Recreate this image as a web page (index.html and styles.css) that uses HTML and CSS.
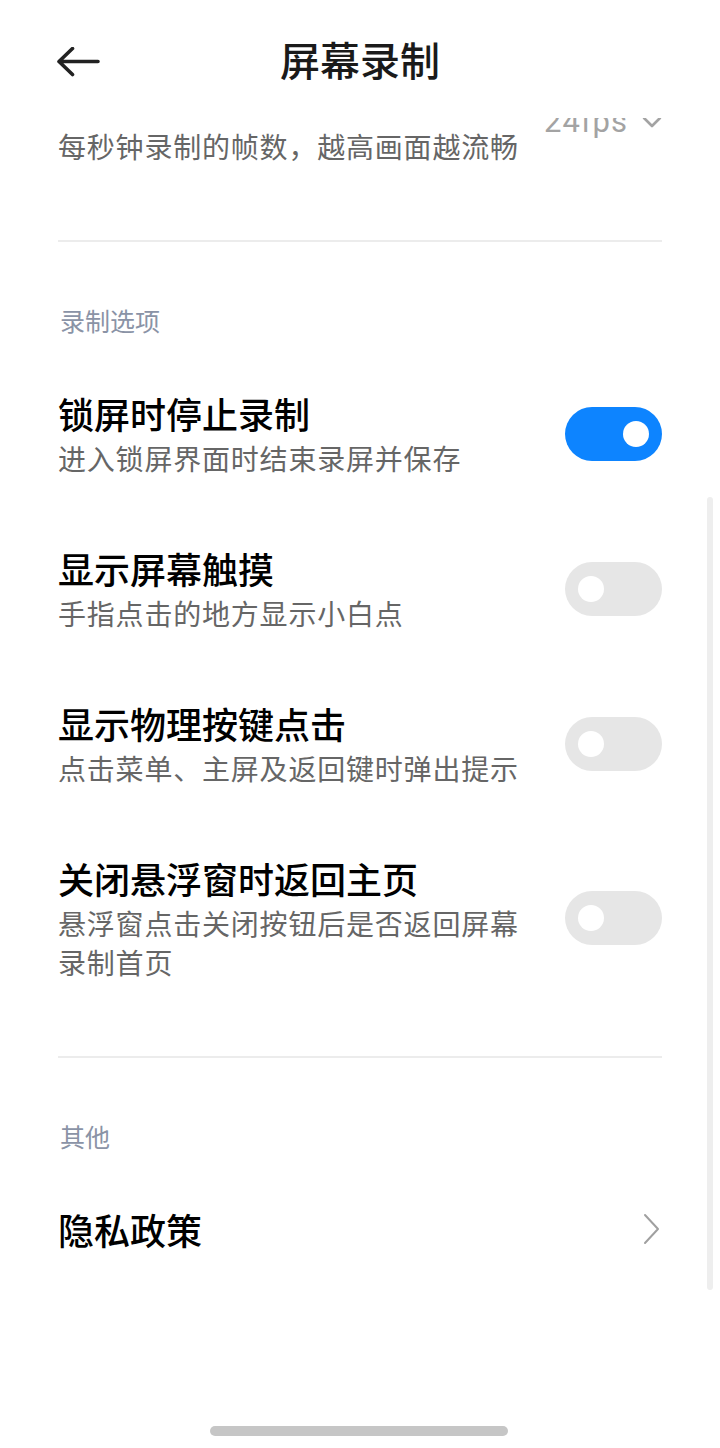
FILE: index.html
```html
<!DOCTYPE html>
<html lang="zh-CN">
<head>
  <meta charset="UTF-8">
  <meta name="viewport" content="width=device-width, initial-scale=1.0">
  <title>屏幕录制</title>
  <link rel="stylesheet" href="styles.css">
</head>
<body>
  <header class="topbar">
    <a class="back" href="#">
      <svg width="44" height="32" viewBox="0 0 44 32">
        <path d="M42 14.5H3.5M16.5 1.5L3 14.5L16.5 27.5" fill="none" stroke="#222" stroke-width="3.6" stroke-linecap="round" stroke-linejoin="round"/>
      </svg>
    </a>
    <h1>屏幕录制</h1>
  </header>

  <main class="list">
    <div class="row first">
      <div class="text">
        <h3>帧率</h3>
        <p>每秒钟录制的帧数，越高画面越流畅</p>
      </div>
      <div class="value">
        24fps
        <svg width="20" height="12" viewBox="0 0 20 12">
          <path d="M2 2L10 10L18 2" fill="none" stroke="#a3a3a3" stroke-width="2.6" stroke-linecap="round" stroke-linejoin="round"/>
        </svg>
      </div>
    </div>

    <div class="divider"></div>

    <div class="section-title">录制选项</div>

    <div class="row">
      <div class="text">
        <h3>锁屏时停止录制</h3>
        <p>进入锁屏界面时结束录屏并保存</p>
      </div>
      <span class="switch on"></span>
    </div>
    <div class="row">
      <div class="text">
        <h3>显示屏幕触摸</h3>
        <p>手指点击的地方显示小白点</p>
      </div>
      <span class="switch"></span>
    </div>
    <div class="row">
      <div class="text">
        <h3>显示物理按键点击</h3>
        <p>点击菜单、主屏及返回键时弹出提示</p>
      </div>
      <span class="switch"></span>
    </div>
    <div class="row">
      <div class="text">
        <h3>关闭悬浮窗时返回主页</h3>
        <p>悬浮窗点击关闭按钮后是否返回屏幕录制首页</p>
      </div>
      <span class="switch"></span>
    </div>

    <div class="divider"></div>

    <div class="section-title">其他</div>

    <div class="row">
      <div class="text">
        <h3>隐私政策</h3>
      </div>
      <svg class="arrow" width="18" height="32" viewBox="0 0 18 32">
        <path d="M2 2L15 16L2 30" fill="none" stroke="#a0a0a0" stroke-width="2" stroke-linecap="round" stroke-linejoin="round"/>
      </svg>
    </div>
  </main>

  <div class="scrollbar"></div>
  <div class="home-bar"></div>
</body>
</html>
```

FILE: styles.css
```css
body {
  margin: 0;
  font-family: "Noto Sans CJK SC", "Noto Sans", sans-serif;
  background: #fff;
  color: #000;
}
.topbar {
  position: fixed;
  top: 0;
  left: 0;
  right: 0;
  height: 118px;
  background: #fff;
  z-index: 2;
  display: flex;
  align-items: center;
  justify-content: center;
}
.topbar h1 {
  margin: 0;
  font-size: 40px;
  font-weight: 500;
  line-height: 50px;
  color: #1a1a1a;
}
.back {
  position: absolute;
  left: 56px;
  top: 47px;
  display: block;
  line-height: 0;
}
.list {
  padding-top: 38px;
}
.row {
  display: flex;
  align-items: center;
  padding: 33px 58px;
  gap: 24px;
}
.text {
  flex: 1;
  min-width: 0;
}
.text h3 {
  margin: 0;
  font-size: 36px;
  font-weight: 500;
  line-height: 48px;
  color: #000;
}
.text p {
  margin: 2px 0 0;
  font-size: 28px;
  letter-spacing: 0.8px;
  line-height: 39px;
  color: #666;
}
.row.first .text p {
  margin-top: 8px;
  white-space: nowrap;
}
.value {
  display: flex;
  align-items: center;
  gap: 14px;
  margin-top: 6px;
  font-family: Roboto, sans-serif;
  font-size: 31px;
  letter-spacing: 1px;
  color: #a3a3a3;
}
.divider {
  height: 2px;
  background: #ececec;
  margin: 41px 58px 0;
}
.section-title {
  padding: 61px 60px 19px;
  font-size: 25px;
  line-height: 34px;
  color: #8a93a6;
}
.switch {
  flex: none;
  width: 97px;
  height: 54px;
  border-radius: 27px;
  background: #e6e6e6;
  position: relative;
}
.switch::after {
  content: "";
  position: absolute;
  top: 14px;
  left: 13px;
  width: 26px;
  height: 26px;
  border-radius: 50%;
  background: #fff;
}
.switch.on {
  background: #0d84ff;
}
.switch.on::after {
  left: auto;
  right: 13px;
}
.arrow {
  flex: none;
  margin-right: 1px;
}
.scrollbar {
  position: fixed;
  right: 7px;
  top: 497px;
  width: 6px;
  height: 793px;
  border-radius: 3px;
  background: #eeeeee;
}
.home-bar {
  position: fixed;
  left: 210px;
  bottom: 12px;
  width: 298px;
  height: 10px;
  border-radius: 5px;
  background: #c6c6c6;
}
```
